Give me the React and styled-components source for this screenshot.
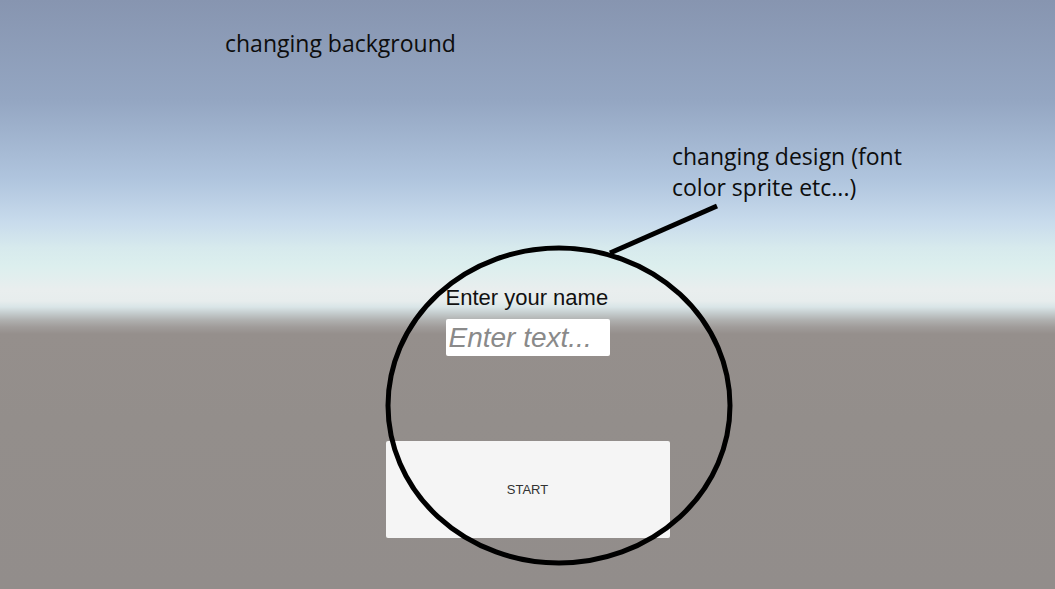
import React from "react"
import styled, { createGlobalStyle } from "styled-components"

const GlobalStyle = createGlobalStyle`
  html, body {
    margin: 0;
    padding: 0;
    overflow: hidden;
  }
  body {
    font-family: "Liberation Sans", Arial, sans-serif;
  }
`

const Scene = styled.div`
  position: relative;
  width: 1055px;
  height: 589px;
  overflow: hidden;
  background: linear-gradient(
    to bottom,
    #8795b0 0px,
    #94a6c2 100px,
    #b0c5de 180px,
    #c8dbec 222px,
    #d7eaed 248px,
    #dcefee 266px,
    #e9eeee 290px,
    #e7eded 301px,
    #d9e5e7 307px,
    #c5cdce 313px,
    #b0b1b0 320px,
    #a09c9a 327px,
    #958f8c 334px,
    #938e8b 420px,
    #928d8b 589px
  );
  display: flex;
  flex-direction: column;
  align-items: center;
`

const Canvas = styled.div`
  display: flex;
  flex-direction: column;
  align-items: center;
  padding-top: 286px;
`

const NameField = styled.div`
  display: flex;
  flex-direction: column;
  width: 164px;
`

const Label = styled.div`
  font-size: 22px;
  line-height: 24px;
  color: #111;
  white-space: nowrap;
`

const TextInput = styled.input`
  box-sizing: border-box;
  width: 164px;
  height: 37px;
  margin-top: 9px;
  padding: 0 0 0 3px;
  border: none;
  border-radius: 2px;
  background: #ffffff;
  font-family: "Liberation Sans", Arial, sans-serif;
  font-size: 28px;
  font-style: italic;
  line-height: 37px;
  color: #222;
  outline: none;

  &::placeholder {
    color: #8a8a8a;
    font-style: italic;
  }
`

const StartButton = styled.button`
  width: 284px;
  height: 97px;
  margin-top: 85px;
  border: none;
  border-radius: 2px;
  background: #f5f5f5;
  color: #323232;
  font-family: "Liberation Sans", Arial, sans-serif;
  font-size: 13px;
  cursor: pointer;
`

const Note = styled.div`
  position: absolute;
  left: ${(p) => p.left}px;
  top: ${(p) => p.top}px;
  width: ${(p) => p.width}px;
  font-family: "Open Sans", "DejaVu Sans", sans-serif;
  font-size: 23px;
  line-height: 31px;
  color: #0d0d0d;
`

const Markup = styled.svg`
  position: absolute;
  left: 0;
  top: 0;
  pointer-events: none;
`

const App = () => {
  return (
    <>
      <GlobalStyle />
      <Scene>
        <Canvas>
          <NameField>
            <Label>Enter your name</Label>
            <TextInput placeholder="Enter text..." />
          </NameField>
          <StartButton>START</StartButton>
        </Canvas>

        <Note left={225} top={28} width={300}>
          changing background
        </Note>
        <Note left={672} top={141} width={250}>
          changing design (font color sprite etc...)
        </Note>

        <Markup width="1055" height="589" viewBox="0 0 1055 589">
          <ellipse
            cx="559"
            cy="405.5"
            rx="171"
            ry="157.5"
            fill="none"
            stroke="#000"
            strokeWidth="5"
          />
          <line
            x1="610"
            y1="253"
            x2="717"
            y2="206"
            stroke="#000"
            strokeWidth="5"
          />
        </Markup>
      </Scene>
    </>
  )
}

export default App
